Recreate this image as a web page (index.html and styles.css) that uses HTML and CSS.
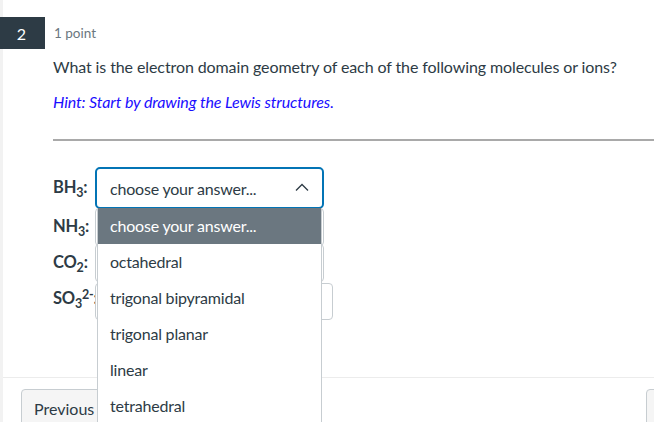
FILE: index.html
```html
<!DOCTYPE html>
<html>
<head>
<meta charset="utf-8">
<link rel="stylesheet" href="styles.css">
</head>
<body>
<div class="page">
  <div class="question">
    <div class="qhead">
      <div class="badge">2</div>
      <div class="points">1 point</div>
    </div>
    <div class="qbody">
      <p class="qtext">What is the electron domain geometry of each of the following molecules or ions?</p>
      <p class="hint">Hint: Start by drawing the Lewis structures.</p>
      <hr class="rule">
      <div class="answers">
        <div class="label">BH<sub>3</sub>:</div>
        <div class="selwrap">
          <div class="select focus">
            <span>choose your answer...</span>
            <svg class="chev" width="14" height="8" viewBox="0 0 14 8"><path d="M1 7.5 L7 1.5 L13 7.5" fill="none" stroke="#2d3b45" stroke-width="1.3"/></svg>
          </div>
          <ul class="menu">
            <li class="active">choose your answer...</li>
            <li>octahedral</li>
            <li>trigonal bipyramidal</li>
            <li>trigonal planar</li>
            <li>linear</li>
            <li>tetrahedral</li>
          </ul>
        </div>
        <div class="label r2">NH<sub>3</sub>:</div>
        <div class="select plain r2"></div>
        <div class="label r3">CO<sub>2</sub>:</div>
        <div class="select plain r3"></div>
        <div class="label r4">SO<sub>3</sub><sup>2-</sup>:</div>
        <div class="select plain wide r4"></div>
      </div>
    </div>
  </div>
  <div class="footer">
    <button class="btn prev">Previous</button>
    <div class="btn next"></div>
  </div>
</div>
</body>
</html>
```
FILE: styles.css
```css
* { box-sizing: border-box; }
html, body { margin: 0; padding: 0; }
body {
  background: #fff;
  font-family: Lato, "Liberation Sans", sans-serif;
  color: #2d3b45;
  width: 654px;
  height: 422px;
  overflow: hidden;
}
.page {
  border-left: 3px solid #f2f2f2;
  height: 422px;
}
.question { padding-top: 17px; }
.qhead { display: flex; align-items: center; margin-left: -3px; }
.badge {
  width: 45px;
  height: 32px;
  background: #2d3b45;
  color: #fff;
  font-size: 16px;
  display: flex;
  align-items: center;
  justify-content: center;
  padding-right: 2px;
}
.points {
  margin-left: 9px;
  font-size: 13.5px;
  color: #6b7780;
}
.qbody { padding-left: 50px; }
.qtext {
  margin: 8px 0 0;
  font-size: 16px;
  line-height: 20px;
  letter-spacing: -0.1px;
}
.hint {
  margin: 15px 0 0;
  font-size: 16px;
  line-height: 20px;
  font-style: italic;
  color: #1a0dff;
  letter-spacing: -0.1px;
}
.rule {
  margin: 27px 0 0;
  border: 0;
  border-top: 2px solid #a9a9a9;
}
.answers {
  margin-top: 26px;
  display: grid;
  grid-template-columns: 41px auto 1fr;
  grid-template-rows: 42px 36px 36px 36px;
  column-gap: 1px;
  align-items: center;
}
.label {
  grid-column: 1;
  font-weight: bold;
  font-size: 16.5px;
  white-space: nowrap;
  letter-spacing: -0.2px;
}
.label sub, .label sup { font-size: 12.5px; }
.label sub { vertical-align: -4px; }
.label sup { vertical-align: 5px; }
.selwrap { grid-column: 2; position: relative; height: 42px; }
.select {
  grid-column: 2;
  height: 38px;
  border: 1px solid #c7cdd1;
  border-radius: 4px;
  display: flex;
  align-items: center;
  padding-left: 13px;
  font-size: 16px;
  width: 229px;
}
.select.focus {
  position: relative;
  height: 42px;
  border: 2px solid #0374b5;
  border-radius: 5px;
  justify-content: space-between;
  padding-right: 13px;
  padding-left: 13px;
  letter-spacing: -0.2px;
}
.chev { margin-top: -2px; }
.plain { background: #fff; }
.wide { width: 238px; height: 37px; margin-top: 5px; }
.r2 { grid-row: 2; }
.r3 { grid-row: 3; }
.r4 { grid-row: 4; }
.menu {
  position: absolute;
  z-index: 5;
  left: 2px;
  top: 41px;
  width: 225px;
  margin: 0;
  padding: 0;
  list-style: none;
  background: #fff;
  border-left: 1px solid #c7cdd1;
  border-right: 1px solid #c7cdd1;
}
.menu li {
  height: 36px;
  line-height: 36px;
  padding-left: 12px;
  font-size: 16px;
  color: #2d3b45;
  letter-spacing: -0.2px;
}
.menu li.active { background: #6b7780; color: #fff; }
.footer {
  margin-top: 60px;
  border-top: 1px solid #ececec;
  display: flex;
  justify-content: space-between;
  padding: 11px 0 0 18px;
}
.btn {
  font-family: Lato, "Liberation Sans", sans-serif;
  font-size: 16px;
  color: #2d3b45;
  background: #f5f5f5;
  border: 1px solid #c7cdd1;
  border-radius: 4px;
  height: 38px;
  padding: 0 12px;
}
.next { width: 40px; margin-right: -32px; }
```
